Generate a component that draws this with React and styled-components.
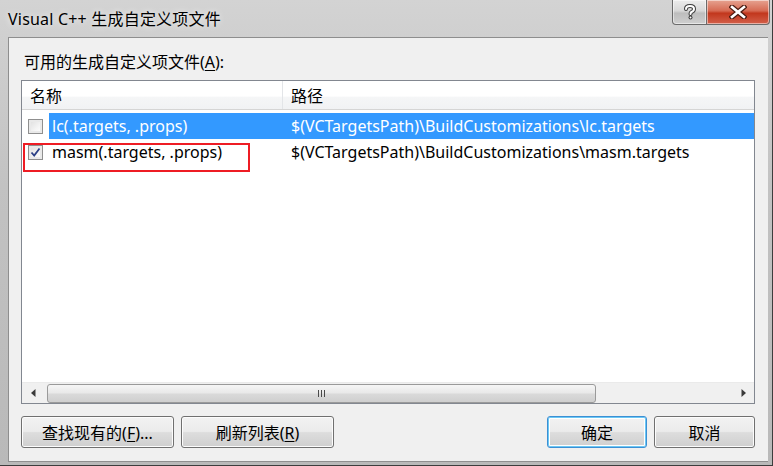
import React from 'react';
import styled, { createGlobalStyle } from 'styled-components';

const GlobalStyle = createGlobalStyle`
  html, body {
    margin: 0;
    padding: 0;
    width: 773px;
    height: 466px;
    overflow: hidden;
    background: #fff;
  }
  * {
    box-sizing: border-box;
  }
`;

const uiFont = `"Noto Sans", "Noto Sans CJK SC", sans-serif`;

const Window = styled.div`
  width: 773px;
  height: 466px;
  display: flex;
  flex-direction: column;
  padding: 0 4px 5px 0;
  background: linear-gradient(180deg, #d3d3d3 0%, #c2c2c2 40%, #b9b9b9 100%);
  border-right: 1px solid #3d3d3d;
  border-bottom: 1px solid #3d3d3d;
  font-family: ${uiFont};
`;

const TitleBar = styled.div`
  height: 37px;
  display: flex;
  align-items: flex-start;
  justify-content: space-between;
  padding-left: 8px;
  flex-shrink: 0;
`;

const Title = styled.div`
  margin-top: 6px;
  font-size: 16px;
  color: #000;
  letter-spacing: 0.2px;
  text-shadow: 0 0 6px rgba(255, 255, 255, 0.9);
`;

const Caption = styled.div`
  display: flex;
  margin-right: -2px;
`;

const CaptionButton = styled.div`
  height: 25px;
  width: ${(p) => (p.$wide ? '63px' : '35px')};
  display: flex;
  align-items: center;
  justify-content: center;
  border: 1px solid #6b6b6b;
  border-top: none;
  border-radius: ${(p) => (p.$wide ? '0 0 4px 0' : '0 0 0 4px')};
  border-left: ${(p) => (p.$wide ? 'none' : '1px solid #6b6b6b')};
  background: ${(p) =>
    p.$wide
      ? 'linear-gradient(180deg, #e6a391 0%, #d66a53 45%, #c2371d 55%, #d3604a 100%)'
      : 'linear-gradient(180deg, #ececec 0%, #d8d8d8 45%, #bdbdbd 55%, #cfcfcf 100%)'};
  box-shadow: inset 0 0 0 1px rgba(255, 255, 255, 0.5);
`;

const Client = styled.div`
  flex: 1;
  display: flex;
  flex-direction: column;
  margin-left: 8px;
  background: #f0f0f0;
  border: 1px solid #8e8e8e;
  border-right: none;
  padding: 14px 13px 13px 12px;
`;

const Label = styled.div`
  font-size: 16px;
  color: #000;
  line-height: 20px;
  margin-bottom: 8px;
  margin-left: 3px;

  u {
    text-decoration: underline;
    text-underline-offset: 2px;
  }
`;

const ListBox = styled.div`
  height: 324px;
  display: flex;
  flex-direction: column;
  background: #fff;
  border: 1px solid #828790;
`;

const HeaderRow = styled.div`
  height: 29px;
  display: grid;
  grid-template-columns: 261px 1fr;
  background: linear-gradient(180deg, #ffffff 0%, #ffffff 55%, #f5f6f7 56%, #f1f2f4 100%);
  border-bottom: 1px solid #d5d5d5;
  flex-shrink: 0;
`;

const HeaderCell = styled.div`
  display: flex;
  align-items: center;
  padding-left: 8px;
  font-size: 16px;
  color: #000;
  border-right: ${(p) => (p.$divider ? '1px solid #e3e5e8' : 'none')};
`;

const Rows = styled.div`
  flex: 1;
  padding-top: 3px;
`;

const Row = styled.div`
  height: 26px;
  display: grid;
  grid-template-columns: 261px 1fr;
  font-size: 16px;
`;

const NameCell = styled.div`
  display: flex;
  align-items: center;
  padding-left: 6px;
  position: relative;
`;

const NameText = styled.div`
  flex: 1;
  height: 100%;
  display: flex;
  align-items: center;
  padding-left: 3px;
  margin-left: 6px;
  background: ${(p) => (p.$selected ? '#3399ff' : 'transparent')};
  color: ${(p) => (p.$selected ? '#fff' : '#000')};
`;

const PathCell = styled.div`
  display: flex;
  align-items: center;
  padding-left: 8px;
  background: ${(p) => (p.$selected ? '#3399ff' : 'transparent')};
  color: ${(p) => (p.$selected ? '#fff' : '#000')};
`;

const CheckBox = styled.div`
  width: 15px;
  height: 15px;
  border: 1px solid #8f8f8f;
  background: linear-gradient(135deg, #dcdcdc 0%, #f4f4f4 60%, #ffffff 100%);
  box-shadow: inset 0 0 0 2px #e9e9e9;
  display: flex;
  align-items: center;
  justify-content: center;
  flex-shrink: 0;
`;

const Highlight = styled.div`
  position: absolute;
  left: 1px;
  top: 4px;
  width: 227px;
  height: 29px;
  border: 2px solid #ee1c24;
  pointer-events: none;
`;

const ScrollBar = styled.div`
  height: 21px;
  display: flex;
  align-items: center;
  background: #f0f0f0;
  border-top: 1px solid #eaeaea;
  flex-shrink: 0;
`;

const ArrowBox = styled.div`
  width: 22px;
  height: 100%;
  display: flex;
  align-items: center;
  justify-content: center;
`;

const Track = styled.div`
  flex: 1;
  height: 100%;
  display: flex;
  align-items: center;
  padding: 1px 0;
`;

const Thumb = styled.div`
  width: 549px;
  height: 19px;
  margin-left: 3px;
  border: 1px solid #9a9a9a;
  border-radius: 3px;
  background: linear-gradient(180deg, #f6f6f6 0%, #e9e9e9 45%, #d9d9d9 55%, #cfcfcf 100%);
  display: flex;
  align-items: center;
  justify-content: center;
`;

const Grip = styled.div`
  display: flex;
  gap: 2px;

  span {
    width: 1px;
    height: 7px;
    background: #4a4a4a;
  }
`;

const ButtonRow = styled.div`
  display: flex;
  align-items: center;
  margin-top: 12px;
`;

const Spacer = styled.div`
  flex: 1;
`;

const Button = styled.button`
  width: ${(p) => p.$w}px;
  height: 32px;
  margin-left: ${(p) => p.$ml || 0}px;
  font-family: ${uiFont};
  font-size: 16px;
  color: #000;
  border-radius: 3px;
  border: 1px solid ${(p) => (p.$focus ? '#3c8fd4' : '#707070')};
  background: linear-gradient(180deg, #f2f2f2 0%, #ebebeb 48%, #dddddd 52%, #cfcfcf 100%);
  box-shadow: ${(p) =>
    p.$focus ? 'inset 0 0 0 1px #6cc8f4, inset 0 0 0 2px #fff' : 'inset 0 0 0 1px #fcfcfc'};
  padding: 0;
  cursor: default;

  u {
    text-decoration: underline;
    text-underline-offset: 2px;
  }
`;

function Check({ checked }) {
  return (
    <CheckBox>
      {checked && (
        <svg width="11" height="11" viewBox="0 0 11 11">
          <path d="M1.5 5.5 L4.2 8.5 L9.5 1.5" fill="none" stroke="#2a3f86" strokeWidth="1.8" />
        </svg>
      )}
    </CheckBox>
  );
}

const items = [
  {
    name: 'lc(.targets, .props)',
    path: '$(VCTargetsPath)\\BuildCustomizations\\lc.targets',
    checked: false,
    selected: true,
  },
  {
    name: 'masm(.targets, .props)',
    path: '$(VCTargetsPath)\\BuildCustomizations\\masm.targets',
    checked: true,
    selected: false,
    marked: true,
  },
];

export default function App() {
  return (
    <>
      <GlobalStyle />
      <Window>
        <TitleBar>
          <Title>Visual C++ 生成自定义项文件</Title>
          <Caption>
            <CaptionButton>
              <svg width="14" height="16" viewBox="0 0 14 16">
                <path
                  d="M3 5 Q3 2 7 2 Q11 2 11 5 Q11 7 8.5 8 Q7.5 8.5 7.5 10"
                  fill="none"
                  stroke="#3b3b3b"
                  strokeWidth="4"
                  strokeLinecap="round"
                />
                <path
                  d="M3 5 Q3 2 7 2 Q11 2 11 5 Q11 7 8.5 8 Q7.5 8.5 7.5 10"
                  fill="none"
                  stroke="#fff"
                  strokeWidth="2"
                  strokeLinecap="round"
                />
                <circle cx="7.5" cy="13.5" r="2" fill="#3b3b3b" />
                <circle cx="7.5" cy="13.5" r="1" fill="#fff" />
              </svg>
            </CaptionButton>
            <CaptionButton $wide>
              <svg width="18" height="14" viewBox="0 0 18 14">
                <path d="M3 2 L15 12 M15 2 L3 12" stroke="#4a1a10" strokeWidth="5" strokeLinecap="square" />
                <path d="M3 2 L15 12 M15 2 L3 12" stroke="#fff" strokeWidth="2.6" strokeLinecap="square" />
              </svg>
            </CaptionButton>
          </Caption>
        </TitleBar>
        <Client>
          <Label>
            可用的生成自定义项文件(<u>A</u>):
          </Label>
          <ListBox>
            <HeaderRow>
              <HeaderCell $divider>名称</HeaderCell>
              <HeaderCell>路径</HeaderCell>
            </HeaderRow>
            <Rows>
              {items.map((item) => (
                <Row key={item.name}>
                  <NameCell>
                    <Check checked={item.checked} />
                    <NameText $selected={item.selected}>{item.name}</NameText>
                    {item.marked && <Highlight />}
                  </NameCell>
                  <PathCell $selected={item.selected}>{item.path}</PathCell>
                </Row>
              ))}
            </Rows>
            <ScrollBar>
              <ArrowBox>
                <svg width="5" height="8" viewBox="0 0 5 8">
                  <path d="M4.5 0 L0 4 L4.5 8 Z" fill="#3a3a3a" />
                </svg>
              </ArrowBox>
              <Track>
                <Thumb>
                  <Grip>
                    <span />
                    <span />
                    <span />
                  </Grip>
                </Thumb>
              </Track>
              <ArrowBox>
                <svg width="5" height="8" viewBox="0 0 5 8">
                  <path d="M0.5 0 L5 4 L0.5 8 Z" fill="#3a3a3a" />
                </svg>
              </ArrowBox>
            </ScrollBar>
          </ListBox>
          <ButtonRow>
            <Button $w={153}>
              查找现有的(<u>F</u>)...
            </Button>
            <Button $w={153} $ml={7}>
              刷新列表(<u>R</u>)
            </Button>
            <Spacer />
            <Button $w={100} $focus>
              确定
            </Button>
            <Button $w={101} $ml={7}>
              取消
            </Button>
          </ButtonRow>
        </Client>
      </Window>
    </>
  );
}
